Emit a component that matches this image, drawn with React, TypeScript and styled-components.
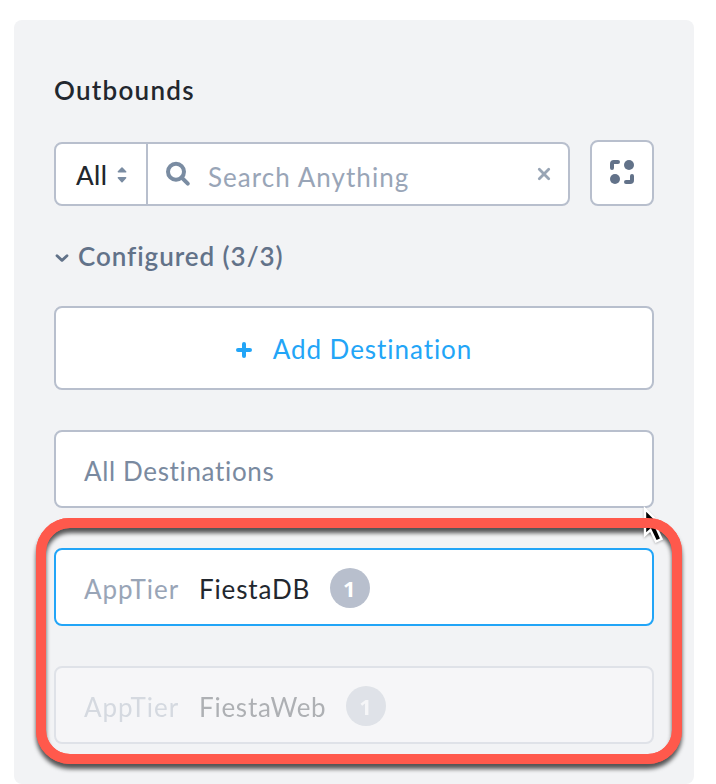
import React from "react";
import styled, { createGlobalStyle } from "styled-components";

const GlobalStyle = createGlobalStyle`
  * { box-sizing: border-box; }
  body {
    margin: 0;
    background: #fff;
    font-family: Lato, "Open Sans", sans-serif;
    font-size: 26px;
    line-height: 32px;
    color: #22272e;
    overflow: hidden;
  }
`;

const Page = styled.div`
  position: relative;
  width: 716px;
  height: 784px;
  padding: 20px 22px 0 14px;
  overflow: hidden;
`;

const Panel = styled.section`
  height: 764px;
  padding: 54px 40px 0;
  border-radius: 8px;
  background: #f2f3f5;
`;

const Label = styled.span<{ $track?: number; $color?: string; $weight?: number }>`
  white-space: nowrap;
  color: ${(p) => p.$color ?? "#22272e"};
  font-weight: ${(p) => p.$weight ?? 400};
  letter-spacing: ${(p) => p.$track ?? 0}px;
`;

const Title = styled.h2`
  margin: 0;
  height: 32px;
  font-size: 26px;
  font-weight: 600;
  letter-spacing: 1.25px;
`;

const Toolbar = styled.div`
  display: flex;
  align-items: flex-end;
  justify-content: space-between;
  height: 66px;
  margin-top: 34px;
`;

const SearchGroup = styled.div`
  display: flex;
  width: 516px;
  height: 64px;
  border: 2px solid #b8bfcd;
  border-radius: 8px;
  background: #fff;
`;

const Scope = styled.div`
  display: flex;
  align-items: center;
  justify-content: space-between;
  width: 92px;
  padding: 2px 19px 0 20px;
  border-right: 2px solid #b8bfcd;
`;

const SearchField = styled.div`
  display: flex;
  flex: 1;
  align-items: center;
  padding: 0 17px 0 17px;
`;

const Placeholder = styled(Label)`
  flex: 1;
  padding: 6px 0 0 17px;
`;

const IconButton = styled.button`
  display: flex;
  align-items: center;
  justify-content: center;
  width: 64px;
  height: 66px;
  padding: 0 0 2px;
  border: 2px solid #b8bfcd;
  border-radius: 8px;
  background: #fff;
`;

const GroupHeading = styled.div`
  display: flex;
  align-items: center;
  gap: 9px;
  height: 32px;
  margin-top: 34px;

  svg { margin-top: 4px; }
`;

const Card = styled.div<{ $active?: boolean; $faded?: boolean }>`
  display: flex;
  align-items: center;
  height: 78px;
  margin-top: 40px;
  padding: 4px 28px 0;
  border: 2px solid ${(p) => (p.$active ? "#22a5f7" : "#b8bfcd")};
  border-radius: 8px;
  background: #fff;
  opacity: ${(p) => (p.$faded ? 0.32 : 1)};
`;

const AddCard = styled(Card)`
  justify-content: center;
  gap: 21px;
  height: 84px;
  margin-top: 34px;
  padding: 1px 0 0;

  svg { margin-top: 3px; }
`;

const Tier = styled(Label)`
  width: 115px;
`;

const Count = styled.span`
  display: flex;
  align-items: center;
  justify-content: center;
  width: 40px;
  height: 40px;
  margin: -4px 0 0 20px;
  padding-right: 2px;
  border-radius: 50%;
  background: #b8bfcd;
  color: #fff;
  font-family: "Open Sans", sans-serif;
  font-size: 22px;
  font-weight: 700;
  transform: translateY(1px);
`;

const Highlight = styled.div`
  position: absolute;
  left: 36px;
  top: 518px;
  width: 646px;
  height: 246px;
  border: 10px solid #ff594c;
  border-radius: 34px;
`;

const HighlightShadow = styled(Highlight)`
  filter: drop-shadow(0 5px 2px rgba(0, 0, 0, 0.65));
`;

const Cursor = styled.svg`
  position: absolute;
  left: 640px;
  top: 504px;
  filter: drop-shadow(0 1px 1px rgba(0, 0, 0, 0.25));
`;

const SortIcon = () => (
  <svg width="10" height="18" viewBox="0 0 10 18" fill="#7a8ca2" stroke="#7a8ca2" strokeWidth="1.6" strokeLinejoin="round">
    <path d="M5 2 8.6 5.8H1.4Z M5 15.6 1.4 11.8H8.6Z" />
  </svg>
);

const SearchIcon = () => (
  <svg width="26" height="26" viewBox="0 0 26 26" fill="none" stroke="#7a8ca2" strokeWidth="4">
    <circle cx="11" cy="10.7" r="8" />
    <path d="m16.5 16.3 6.3 6.3" strokeLinecap="round" />
  </svg>
);

const CloseIcon = () => (
  <svg width="14" height="14" viewBox="0 0 14 14" fill="none" stroke="#98a5b5" strokeWidth="2.8" strokeLinecap="round">
    <path d="m2.3 2.3 9.4 9.4M11.7 2.3 2.3 11.7" />
  </svg>
);

const FocusIcon = () => (
  <svg width="24" height="24" viewBox="0 0 24 24" fill="none" stroke="#627289" strokeWidth="4" strokeLinecap="round" strokeLinejoin="round">
    <path d="M2 8V3.8Q2 2 3.8 2H8M22 16v4.2q0 1.8-1.8 1.8H16" />
    <g fill="#627289" stroke="none">
      <circle cx="19" cy="5" r="5" />
      <circle cx="5" cy="19" r="5" />
    </g>
  </svg>
);

const Chevron = () => (
  <svg width="15" height="10" viewBox="0 0 15 10" fill="none" stroke="#627289" strokeWidth="2.8" strokeLinecap="round" strokeLinejoin="round">
    <path d="M3 2.8 8 7.4 13 2.8" />
  </svg>
);

const PlusIcon = () => (
  <svg width="16" height="16" viewBox="0 0 16 16" stroke="#22a5f7" strokeWidth="4" strokeLinecap="round">
    <path d="M8 2v12M2 8h12" />
  </svg>
);

function Destination({ name, track, active, faded }: { name: string; track: number; active?: boolean; faded?: boolean }) {
  return (
    <Card $active={active} $faded={faded}>
      <Tier $color="#99a5b7" $track={1}>AppTier</Tier>
      <Label $track={track}>{name}</Label>
      <Count>1</Count>
    </Card>
  );
}

export default function App() {
  return (
    <Page>
      <GlobalStyle />
      <Panel>
        <Title>Outbounds</Title>
        <Toolbar>
          <SearchGroup>
            <Scope>
              <Label $weight={500} $track={0.4}>All</Label>
              <SortIcon />
            </Scope>
            <SearchField>
              <SearchIcon />
              <Placeholder $color="#99a5b7" $track={1.05}>Search Anything</Placeholder>
              <CloseIcon />
            </SearchField>
          </SearchGroup>
          <IconButton aria-label="Expand">
            <FocusIcon />
          </IconButton>
        </Toolbar>
        <GroupHeading>
          <Chevron />
          <Label $color="#627289" $weight={600} $track={0.95}>Configured (3/3)</Label>
        </GroupHeading>
        <AddCard>
          <PlusIcon />
          <Label $color="#22a5f7" $weight={400} $track={0.95}>Add Destination</Label>
        </AddCard>
        <Card>
          <Label $color="#7a8aa0" $track={0.65}>All Destinations</Label>
        </Card>
        <Destination name="FiestaDB" track={0.85} active />
        <Destination name="FiestaWeb" track={0.75} faded />
      </Panel>
      <HighlightShadow />
      <Cursor width="30" height="42" viewBox="0 0 30 42">
        <path d="M5 5V31L10.5 26 16 37.5 21.5 35 16.5 24H24Z" fill="#000" stroke="#fff" strokeWidth="2.4" />
      </Cursor>
      <Highlight />
    </Page>
  );
}
